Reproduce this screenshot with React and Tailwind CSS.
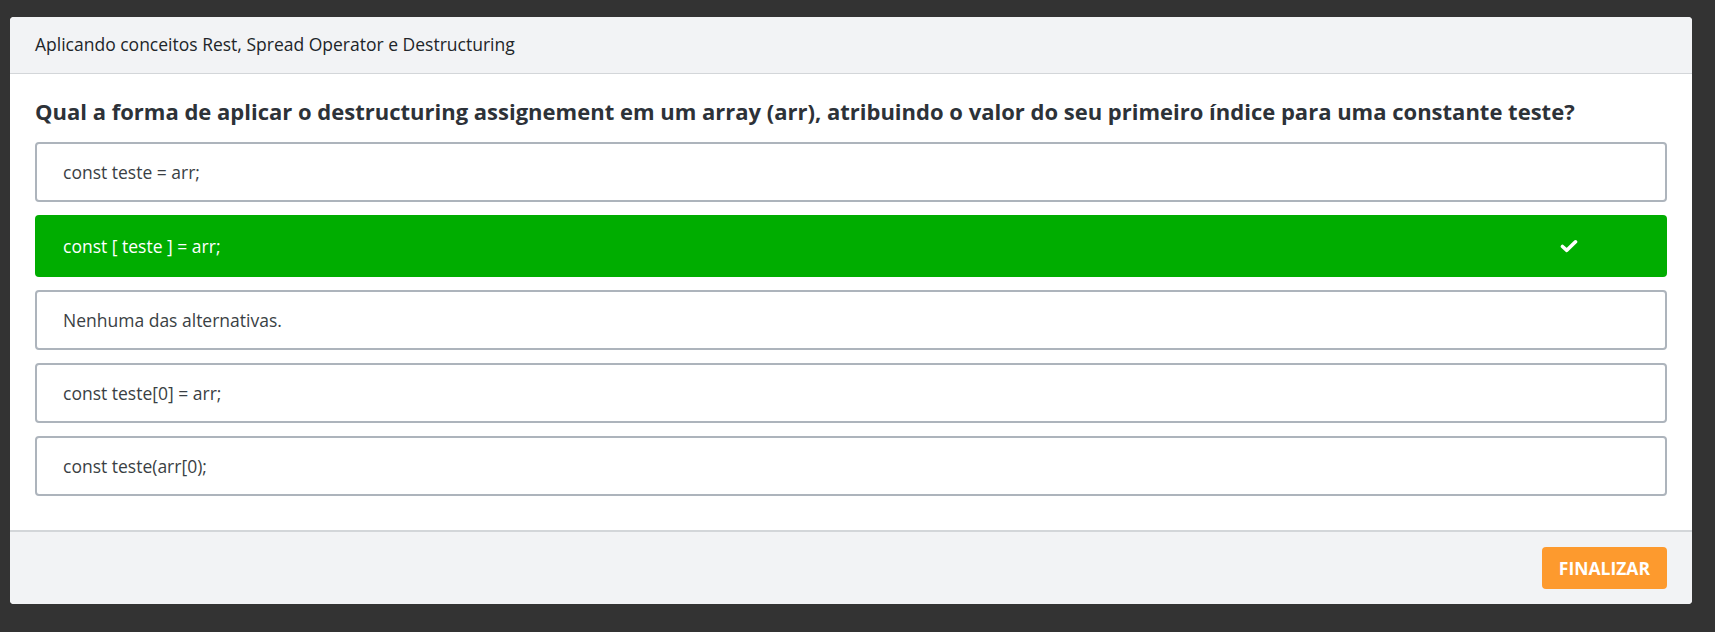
const options = [
    { text: 'const teste = arr;', correct: false },
    { text: 'const [ teste ] = arr;', correct: true },
    { text: 'Nenhuma das alternativas.', correct: false },
    { text: 'const teste[0] = arr;', correct: false },
    { text: 'const teste(arr[0);', correct: false },
];

function Check() {
    return (
        <svg width="18" height="14" viewBox="0 0 18 14" fill="none">
            <polyline
                points="2.5,7.5 6.8,11.3 15.5,2.8"
                stroke="white"
                strokeWidth="3.6"
                strokeLinecap="round"
                strokeLinejoin="round"
            />
        </svg>
    );
}

export default function App() {
    return (
        <div
            className="h-[632px] w-full bg-[#333333] pt-[17px] pl-[10px]"
            style={{ fontFamily: '"Open Sans", "Noto Sans", sans-serif' }}
        >
            <div className="w-[1682px] h-[587px] bg-white rounded-[4px] overflow-hidden flex flex-col">
                {/* header */}
                <div className="h-[57px] shrink-0 bg-[#f2f3f5] border-b border-[#d3d6d9] flex items-center px-[25px]">
                    <span className="text-[17.5px] text-[#212529] leading-none">
                        Aplicando conceitos Rest, Spread Operator e Destructuring
                    </span>
                </div>

                {/* body */}
                <div className="flex-1 px-[25px] pt-[21px]">
                    <h2 className="text-[22px] leading-[32px] font-bold text-[#2d3238]">
                        Qual a forma de aplicar o destructuring assignement em um array (arr), atribuindo o valor do seu primeiro índice para uma constante teste?
                    </h2>
                    <div className="mt-[15px] flex flex-col gap-[13px]">
                        {options.map((opt) =>
                            opt.correct ? (
                                <div
                                    key={opt.text}
                                    className="h-[62px] rounded-[4px] bg-[#00ad00] flex items-center justify-between pl-[28px] pr-[89px]"
                                >
                                    <span className="text-[17.5px] text-white">{opt.text}</span>
                                    <Check />
                                </div>
                            ) : (
                                <div
                                    key={opt.text}
                                    className="h-[60px] rounded-[4px] border-2 border-[#adb4bc] bg-white flex items-center pl-[26px]"
                                >
                                    <span className="text-[17.5px] text-[#3a3f44]">{opt.text}</span>
                                </div>
                            )
                        )}
                    </div>
                </div>

                {/* footer */}
                <div className="h-[74px] shrink-0 bg-[#f2f3f5] border-t-2 border-[#d3d6d9] flex items-start justify-end pr-[25px] pt-[15px]">
                    <button className="h-[42px] px-[17px] rounded-[4px] bg-[#fd9a2e] text-white text-[17.5px] font-bold uppercase">
                        Finalizar
                    </button>
                </div>
            </div>
        </div>
    );
}
